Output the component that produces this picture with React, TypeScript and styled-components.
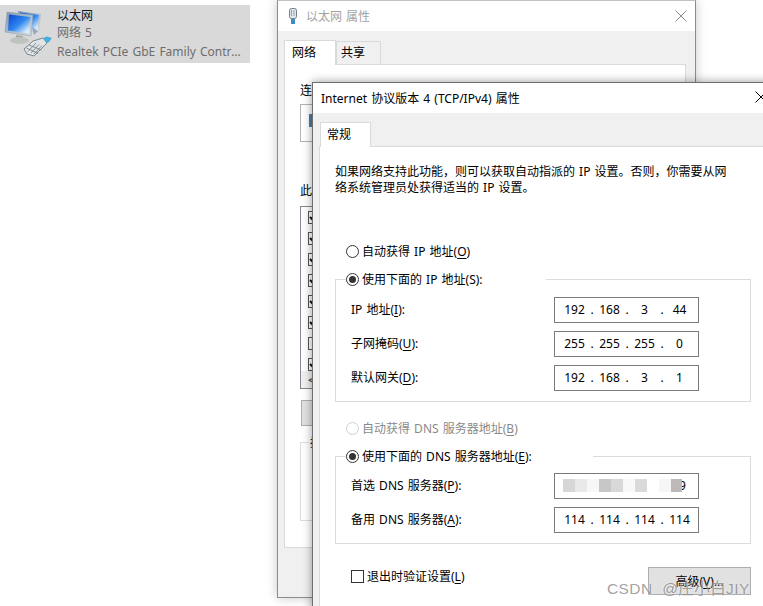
import React from 'react';
import styled, { createGlobalStyle } from 'styled-components';

const GlobalStyle = createGlobalStyle`
  html, body {
    margin: 0;
    padding: 0;
    background: #fff;
    overflow: hidden;
  }
  body {
    font-family: "Noto Sans", "Noto Sans CJK SC", sans-serif;
    font-size: 12px;
    word-spacing: 1px;
    color: #000;
  }
`;

const Desktop = styled.div`
  position: relative;
  width: 763px;
  height: 606px;
  overflow: hidden;
  background: #fff;
`;

/* adapter tile, top left */
const AdapterTile = styled.div`
  position: absolute;
  left: 0;
  top: 5px;
  width: 250px;
  height: 58px;
  display: flex;
  background: #d9d9d9;
`;

const AdapterIcon = styled.svg`
  width: 52px;
  height: 52px;
  margin: 0 3px 0 2px;
  flex: none;
`;

const AdapterText = styled.div`
  width: 188px;
  padding-top: 2px;
  color: #6d6d6d;
  line-height: 18px;
`;

const AdapterName = styled.div`
  color: #111;
`;

const AdapterLine = styled.div<{ $shift: number }>`
  margin-top: ${p => p.$shift}px;
  white-space: nowrap;
  overflow: hidden;
  text-overflow: ellipsis;
`;

/* back dialog */
const BackWindow = styled.div`
  position: absolute;
  left: 277px;
  top: 0;
  width: 419px;
  height: 598px;
  box-sizing: border-box;
  background: #f0f0f0;
  border: 1px solid #8c8c8c;
  border-top-color: #c0c0c0;
  box-shadow: 0 0 10px rgba(0, 0, 0, 0.22);
`;

const BackTitle = styled.div`
  height: 30px;
  box-sizing: border-box;
  display: flex;
  align-items: center;
  padding: 0 8px 1px 10px;
  background: #fff;
  color: #a3a3a3;
  gap: 8px;
`;

const TitleText = styled.span`
  flex: 1;
  white-space: nowrap;
`;

const CloseIcon = styled.svg<{ $color: string }>`
  width: 12px;
  height: 12px;
  flex: none;
  stroke: ${p => p.$color};
  stroke-width: 1;
  fill: none;
`;

const BackTabs = styled.div`
  height: 33px;
  padding-left: 6px;
  display: flex;
  align-items: flex-end;
`;

const Tab = styled.div<{ $active?: boolean; $width: number; $inset: number }>`
  width: ${p => p.$width}px;
  height: ${p => (p.$active ? 25 : 23)}px;
  box-sizing: border-box;
  display: flex;
  align-items: center;
  padding: 0 0 2px ${p => p.$inset}px;
  border: 1px solid #d9d9d9;
  border-bottom: 0;
  background: ${p => (p.$active ? '#fff' : '#f0f0f0')};
  margin-bottom: ${p => (p.$active ? -1 : 0)}px;
  position: relative;
`;

const BackPanel = styled.div`
  width: 402px;
  height: 484px;
  margin-left: 6px;
  box-sizing: border-box;
  background: #fff;
  border: 1px solid #d9d9d9;
  padding: 17px 0 0 15px;
`;

const BackLabel = styled.div<{ $top: number }>`
  margin-top: ${p => p.$top}px;
  line-height: 18px;
  color: #000;
`;

const AdapterBox = styled.div`
  width: 340px;
  height: 38px;
  margin-top: 4px;
  box-sizing: border-box;
  border: 1px solid #b4b4b4;
  padding: 9px 0 0 8px;
`;

const AdapterGlyph = styled.div`
  width: 12px;
  height: 13px;
  background: #4d7fa8;
`;

const ItemList = styled.div`
  width: 340px;
  height: 183px;
  margin-top: 6px;
  box-sizing: border-box;
  border: 1px solid #828790;
  position: relative;
  padding: 4px 0 0 7px;
`;

const ItemRow = styled.div`
  height: 21px;
`;

const ItemCheck = styled.svg`
  width: 13px;
  height: 13px;
  display: block;
`;

const ListScroll = styled.div`
  position: absolute;
  left: 0;
  right: 0;
  bottom: 0;
  height: 17px;
  background: #f0f0f0;
  color: #555;
  line-height: 17px;
  padding-left: 7px;
  font-size: 11px;
  font-weight: 700;
`;

const BackButton = styled.div`
  width: 100px;
  height: 26px;
  margin: 11px 0 0 1px;
  box-sizing: border-box;
  background: #e1e1e1;
  border: 1px solid #adadad;
`;

const BackGroup = styled.div`
  position: relative;
  width: 340px;
  height: 79px;
  margin-top: 16px;
  box-sizing: border-box;
  border: 1px solid #dcdcdc;
`;

const BackGroupLegend = styled.span`
  position: absolute;
  left: 8px;
  top: -9px;
  background: #fff;
  line-height: 18px;
  padding: 0 1px;
`;

/* front dialog */
const FrontWindow = styled.div`
  position: absolute;
  left: 312px;
  top: 82px;
  width: 460px;
  height: 540px;
  box-sizing: border-box;
  background: #f0f0f0;
  border: 1px solid #6e6e6e;
  box-shadow: 0 0 9px rgba(0, 0, 0, 0.4);
`;

const FrontTitle = styled.div`
  height: 30px;
  display: flex;
  align-items: center;
  padding-left: 8px;
  background: #fff;
  position: relative;
`;

const FrontClose = styled.span`
  position: absolute;
  left: 442px;
  top: 8px;
  line-height: 0;
`;

const FrontTabs = styled.div`
  height: 33px;
  padding-left: 7px;
  display: flex;
  align-items: flex-end;
`;

const FrontPanel = styled.div`
  margin-left: 6px;
  height: 470px;
  box-sizing: border-box;
  background: #fff;
  border-top: 1px solid #d9d9d9;
  border-left: 1px solid #d9d9d9;
  padding: 17px 0 0 15px;
`;

const PanelBody = styled.div`
  width: 416px;
`;

const Intro = styled.p`
  margin: 0;
  width: 400px;
  line-height: 16px;
`;

const RadioRow = styled.div<{ $top: number; $disabled?: boolean }>`
  display: flex;
  align-items: center;
  gap: 3px;
  height: 18px;
  margin: ${p => p.$top}px 0 0 11px;
  color: ${p => (p.$disabled ? '#8a8a8a' : '#000')};
`;

const RadioDot = styled.span<{ $checked?: boolean; $disabled?: boolean }>`
  width: 13px;
  height: 13px;
  box-sizing: border-box;
  flex: none;
  border-radius: 50%;
  border: 1px solid ${p => (p.$disabled ? '#cfcfcf' : '#333')};
  background: #fff;
  display: flex;
  align-items: center;
  justify-content: center;
  &::after {
    content: '';
    display: ${p => (p.$checked ? 'block' : 'none')};
    width: 7px;
    height: 7px;
    border-radius: 50%;
    background: #333;
  }
`;

const Group = styled.fieldset<{ $top: number; $legendWidth: number; $pad: number }>`
  margin: ${p => p.$top}px 0 0;
  padding: ${p => p.$pad}px 51px 10px 15px;
  min-width: 0;
  border: 1px solid #dcdcdc;
  display: flex;
  flex-direction: column;
  gap: 8px;

  legend {
    padding: 0;
    margin-left: -5px;
    width: ${p => p.$legendWidth}px;
    background: #fff;
  }
`;

const LegendRow = styled.div`
  display: flex;
  align-items: center;
  gap: 3px;
  height: 18px;
`;

const FieldRow = styled.div`
  display: flex;
  justify-content: space-between;
  align-items: center;
`;

const FieldLabel = styled.label`
  white-space: nowrap;
  padding-bottom: 2px;
`;

const IpBox = styled.div`
  width: 145px;
  height: 26px;
  box-sizing: border-box;
  border: 1px solid #7a7a7a;
  background: #fff;
  display: flex;
  align-items: center;
  padding: 0 0 1px 6px;
`;

const Octet = styled.span`
  width: 27px;
  text-align: center;
`;

const Dot = styled.span`
  width: 8px;
  text-align: center;
`;

const Mosaic = styled.div`
  display: flex;
  align-items: center;
  height: 13px;
  margin-left: 2px;
`;

const MosaicCell = styled.span<{ $w: number; $shade: string }>`
  position: relative;
  width: ${p => p.$w}px;
  height: 13px;
  background: ${p => p.$shade};
`;

const MosaicEnd = styled.span`
  margin-left: -3px;
  line-height: 13px;
`;

const Footer = styled.div`
  display: flex;
  justify-content: space-between;
  align-items: flex-start;
  margin-top: 23px;
`;

const CheckRow = styled.div`
  display: flex;
  align-items: center;
  gap: 3px;
  height: 18px;
  margin: 0 0 0 16px;
`;

const CheckBox = styled.span`
  width: 13px;
  height: 13px;
  box-sizing: border-box;
  border: 1px solid #333;
  background: #fff;
`;

const PushButton = styled.div`
  width: 103px;
  height: 28px;
  box-sizing: border-box;
  background: #e1e1e1;
  border: 1px solid #adadad;
  display: flex;
  align-items: center;
  justify-content: center;
`;

const Watermark = styled.div`
  position: absolute;
  left: 607px;
  top: 579px;
  font-family: "Liberation Sans", "Noto Sans CJK SC", sans-serif;
  font-size: 15.5px;
  letter-spacing: 0.4px;
  word-spacing: 5px;
  line-height: 20px;
  color: rgba(110, 110, 110, 0.65);
  text-shadow: 0 0 2px rgba(255, 255, 255, 0.8);
  white-space: nowrap;
`;

const Key = styled.span`
  text-decoration: underline;
  text-underline-offset: 2px;
`;

const NetworkIcon = () => (
  <AdapterIcon viewBox="0 0 52 52">
    <defs>
      <linearGradient id="screen" x1="0" y1="0" x2="1" y2="1">
        <stop offset="0" stopColor="#0a45d0" />
        <stop offset="0.5" stopColor="#2f86ee" />
        <stop offset="0.85" stopColor="#d5e9fb" />
        <stop offset="1" stopColor="#f4f9fd" />
      </linearGradient>
      <linearGradient id="frame" x1="0" y1="0" x2="1" y2="1">
        <stop offset="0" stopColor="#7f9ab5" />
        <stop offset="1" stopColor="#d6dde3" />
      </linearGradient>
    </defs>
    <path d="M16 6 L39 9 L37 28 L27 27 L26 12 L16 10 Z" fill="url(#frame)" />
    <path d="M18 7.5 L37 10 L35.5 26 L28 25 L27 12 L18 10 Z" fill="url(#screen)" />
    <path d="M5 7 L31 10 L29 31 L3 27 Z" fill="url(#frame)" stroke="#8c99a6" strokeWidth="0.5" />
    <path d="M7 9.5 L28.5 12 L27 28.5 L6 25.5 Z" fill="url(#screen)" />
    <path d="M14 30 L21 31 L21 34 L14 33 Z" fill="#a5aaa5" />
    <ellipse cx="17.5" cy="35.5" rx="9.5" ry="3.5" fill="#bfc3bf" />
    <path d="M30 22 L36 26 L32 30 Z" fill="#97a8b8" />
    <path d="M22 44 L31 36 L41 33 L45 38 L37 46 L32 51 L25 49 Z" fill="#dfe4e7" stroke="#6f7a84" strokeWidth="0.9" />
    <path d="M26 46.5 L34 38 M29 48 L37 39.5 M32 49 L40 40.5 M24.5 43 L36 48.5 M27 40 L39.5 45" stroke="#6f7a84" strokeWidth="0.8" />
    <path d="M41 33 L45 31.5 L50 33 L47 37 L45 38 Z" fill="#45aede" />
  </AdapterIcon>
);

const PlugIcon = () => (
  <svg width="10" height="16" viewBox="0 0 10 16">
    <rect x="1.5" y="0.5" width="7" height="10" rx="2" fill="#e4e8ea" stroke="#6f7f8a" />
    <rect x="3" y="2" width="1" height="6" fill="#8ea0ac" />
    <rect x="5.5" y="2" width="1" height="6" fill="#8ea0ac" />
    <rect x="3" y="11" width="4" height="5" fill="#3b8fc4" />
  </svg>
);

const Close = ({ color }: { color: string }) => (
  <CloseIcon $color={color} viewBox="0 0 12 12">
    <path d="M0.5 0.5 L11.5 11.5 M11.5 0.5 L0.5 11.5" />
  </CloseIcon>
);

const IpField = ({ parts }: { parts: string[] }) => (
  <IpBox>
    {parts.map((part, i) => (
      <React.Fragment key={i}>
        <Octet>{part}</Octet>
        {i < 3 && <Dot>.</Dot>}
      </React.Fragment>
    ))}
  </IpBox>
);

const mosaic: [number, string][] = [
  [12, '#d6d6d6'],
  [12, '#e9e9e9'],
  [12, '#f7f7f7'],
  [12, '#c9c7c6'],
  [12, '#d8d8d8'],
  [12, '#f8f8f8'],
  [12, '#dadada'],
  [12, '#ffffff'],
  [12, '#f6f6f6'],
  [11, '#bdb9b8'],
];

export default function App() {
  return (
    <Desktop>
      <GlobalStyle />

      <AdapterTile>
        <NetworkIcon />
        <AdapterText>
          <AdapterName>以太网</AdapterName>
          <AdapterLine $shift={-1}>网络 5</AdapterLine>
          <AdapterLine $shift={1}>Realtek PCIe GbE Family Controller</AdapterLine>
        </AdapterText>
      </AdapterTile>

      <BackWindow>
        <BackTitle>
          <PlugIcon />
          <TitleText>以太网 属性</TitleText>
          <Close color="#8a8a8a" />
        </BackTitle>
        <BackTabs>
          <Tab $active $width={52} $inset={7}>网络</Tab>
          <Tab $width={45} $inset={4}>共享</Tab>
        </BackTabs>
        <BackPanel>
          <BackLabel $top={0}>连接时使用：</BackLabel>
          <AdapterBox>
            <AdapterGlyph />
          </AdapterBox>
          <BackLabel $top={40}>此连接使用下列项目：</BackLabel>
          <ItemList>
            {[1, 1, 1, 1, 1, 1, 0, 1].map((checked, i) => (
              <ItemRow key={i}>
                <ItemCheck viewBox="0 0 13 13">
                  <rect x="0.5" y="0.5" width="12" height="12" fill="#fff" stroke="#555" />
                  {checked === 1 && <path d="M2 6 L5 9 L10 4" fill="none" stroke="#111" strokeWidth="2" />}
                </ItemCheck>
              </ItemRow>
            ))}
            <ListScroll>&lt;</ListScroll>
          </ItemList>
          <BackButton />
          <BackGroup>
            <BackGroupLegend>描述</BackGroupLegend>
          </BackGroup>
        </BackPanel>
      </BackWindow>

      <FrontWindow>
        <FrontTitle>
          <TitleText>Internet 协议版本 4 (TCP/IPv4) 属性</TitleText>
          <FrontClose>
            <Close color="#000" />
          </FrontClose>
        </FrontTitle>
        <FrontTabs>
          <Tab $active $width={51} $inset={6}>常规</Tab>
        </FrontTabs>
        <FrontPanel>
          <PanelBody>
            <Intro>
              如果网络支持此功能，则可以获取自动指派的 IP 设置。否则，你需要从网络系统管理员处获得适当的 IP 设置。
            </Intro>

            <RadioRow $top={46}>
              <RadioDot />
              <span>自动获得 IP 地址(<Key>O</Key>)</span>
            </RadioRow>

            <Group $top={10} $legendWidth={200} $pad={9}>
              <legend>
                <LegendRow>
                  <RadioDot $checked />
                  <span>使用下面的 IP 地址(S):</span>
                </LegendRow>
              </legend>
              <FieldRow>
                <FieldLabel>IP 地址(<Key>I</Key>):</FieldLabel>
                <IpField parts={['192', '168', '3', '44']} />
              </FieldRow>
              <FieldRow>
                <FieldLabel>子网掩码(<Key>U</Key>):</FieldLabel>
                <IpField parts={['255', '255', '255', '0']} />
              </FieldRow>
              <FieldRow>
                <FieldLabel>默认网关(<Key>D</Key>):</FieldLabel>
                <IpField parts={['192', '168', '3', '1']} />
              </FieldRow>
            </Group>

            <RadioRow $top={17} $disabled>
              <RadioDot $disabled />
              <span>自动获得 DNS 服务器地址(<Key>B</Key>)</span>
            </RadioRow>

            <Group $top={10} $legendWidth={247} $pad={8}>
              <legend>
                <LegendRow>
                  <RadioDot $checked />
                  <span>使用下面的 DNS 服务器地址(<Key>E</Key>):</span>
                </LegendRow>
              </legend>
              <FieldRow>
                <FieldLabel>首选 DNS 服务器(<Key>P</Key>):</FieldLabel>
                <IpBox>
                  <Mosaic>
                    {mosaic.map(([w, shade], i) => (
                      <MosaicCell key={i} $w={w} $shade={shade} />
                    ))}
                    <MosaicEnd>9</MosaicEnd>
                  </Mosaic>
                </IpBox>
              </FieldRow>
              <FieldRow>
                <FieldLabel>备用 DNS 服务器(<Key>A</Key>):</FieldLabel>
                <IpField parts={['114', '114', '114', '114']} />
              </FieldRow>
            </Group>

            <Footer>
              <CheckRow>
                <CheckBox />
                <span>退出时验证设置(<Key>L</Key>)</span>
              </CheckRow>
              <PushButton>高级(<Key>V</Key>)...</PushButton>
            </Footer>
          </PanelBody>
        </FrontPanel>
      </FrontWindow>

      <Watermark>CSDN @庄小白JIY</Watermark>
    </Desktop>
  );
}
